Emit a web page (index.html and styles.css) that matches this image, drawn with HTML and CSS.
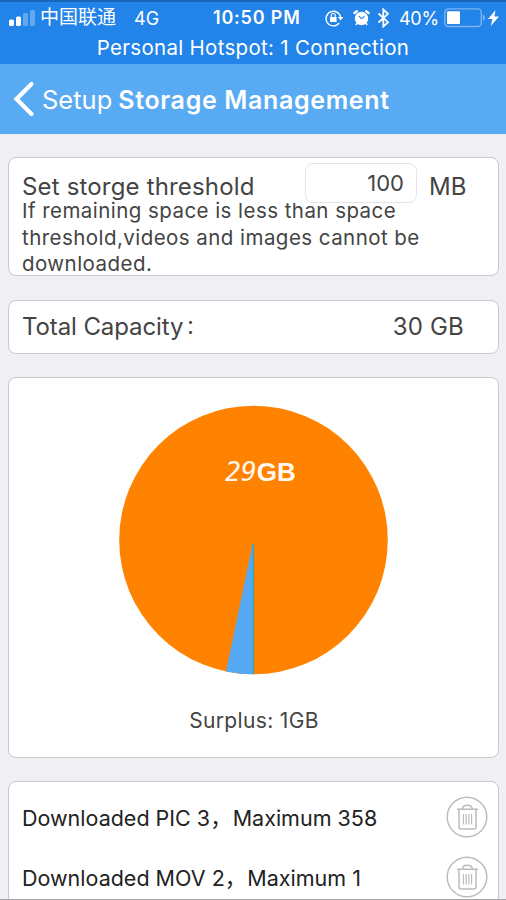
FILE: index.html
```html
<!DOCTYPE html>
<html lang="en">
<head>
<meta charset="utf-8">
<title>Storage Management</title>
<link rel="stylesheet" href="styles.css">
</head>
<body>
<header>
  <div class="status">
    <div class="status-row">
      <div class="status-left">
        <svg class="signal" width="27" height="18" viewBox="0 0 27 18" fill="#fff"><rect x="0" y="10.5" width="5" height="6.5" rx="1.5"/><rect x="7" y="7.5" width="5" height="9.5" rx="1.5"/><g opacity=".3"><rect x="14" y="4" width="5" height="13" rx="1.5"/><rect x="21" y="1" width="5" height="16" rx="1.5"/></g></svg>
        <span class="carrier">中国联通</span>
        <span class="network">4G</span>
      </div>
      <span class="clock">10:50 PM</span>
      <div class="status-right">
        <svg class="lock" width="19" height="18" viewBox="0 0 19 18"><path d="M14.2 14A7.3 7.3 0 1 1 15.6 8.500" fill="none" stroke="#fff" stroke-width="1.4"/><path d="M12.800 8h5.600l-2.800 3.600z" fill="#fff"/><rect x="5" y="8" width="6.6" height="5" rx=".6" fill="#fff"/><path d="M6.300 8V6.5a2 2 0 0 1 4 0V8" fill="none" stroke="#fff" stroke-width="1.2"/></svg>
        <svg class="alarm" width="17" height="18" viewBox="0 0 17 18"><circle cx="8.5" cy="9.5" r="6.7" fill="#fff"/><path d="M1.500 4 3.800 2.200M13.200 2.200 15.500 4" stroke="#fff" stroke-width="2.4" stroke-linecap="round"/><path d="m4 14.300-1.200 1.600m10.200-1.600 1.200 1.600" stroke="#fff" stroke-width="1.6"/><path d="M8.500 9.800 5.800 6.800M8.500 9.800l3-2.500" fill="none" stroke="#2283e8" stroke-width="1.100"/></svg>
        <svg class="bluetooth" width="13" height="20" viewBox="0 0 13 20"><path d="m1.5 5.5 9.5 8.7-4.7 4.3V1.5L11 5.8 1.5 14.5" fill="none" stroke="#fff" stroke-width="1.8"/></svg>
        <span class="percent">40%</span>
        <svg class="battery" width="42" height="20" viewBox="0 0 42 20"><rect x=".8" y=".9" width="36.500" height="17.6" rx="3.5" fill="none" stroke="#fff" stroke-opacity=".4" stroke-width="1.4"/><rect x="3" y="3.3" width="13" height="12.8" rx="1" fill="#fff"/><path d="M38.800 6.500c2.800 1 2.800 5.500 0 6.500z" fill="#fff" fill-opacity=".4"/></svg>
        <svg class="bolt" width="11" height="16" viewBox="0 0 11 16"><path d="M7.5 0 0 9h4.4L2.8 16 11 6.6H6.4z" fill="#fff"/></svg>
      </div>
    </div>
    <div class="hotspot">Personal Hotspot: 1 Connection</div>
  </div>
  <nav>
    <svg class="back" width="22" height="36" viewBox="0 0 22 36"><path d="M18.5 3 3.5 18l15 15" fill="none" stroke="#fff" stroke-width="4.2" stroke-linecap="round"/></svg>
    <span class="setup">Setup</span>
    <h1>Storage Management</h1>
  </nav>
</header>
<main>
  <section class="card threshold">
    <div class="threshold-row">
      <span class="label set-label">Set storge threshold</span>
      <span class="field">100</span>
      <span class="label unit">MB</span>
    </div>
    <p>If remaining space is less than space<br>threshold,videos and images cannot be<br>downloaded.</p>
  </section>
  <section class="card capacity">
    <span class="label total-label">Total Capacity<span class="cjk">：</span></span>
    <span class="label amount">30 GB</span>
  </section>
  <section class="card chart">
    <div class="pie">
      <svg width="270" height="270" viewBox="0 0 270 270"><circle cx="134.500" cy="135" r="134.3" fill="#ff8200"/><path d="M134 137 107 266.5A134.3 134.3 0 0 0 134.5 269.3z" fill="#55a9f3"/><path d="M134.3 139v130" stroke="#32a6bd" stroke-width="1.5"/></svg>
      <div class="pie-label"><span class="digits">29</span><b>GB</b></div>
    </div>
    <div class="surplus">Surplus: 1GB</div>
  </section>
  <section class="card downloads">
    <div class="item">
      <span class="pic">Downloaded PIC 3<span class="cjk">，</span>Maximum 358</span>
      <svg class="trash" width="42" height="42" viewBox="0 0 42 42" fill="none" stroke="#bcbcbc" stroke-width="1.5"><circle cx="21" cy="21" r="19.8"/><path d="M11 13.3h21M16.5 13c.2-5 9.500-5 9.700 0M13 14v17q0 2 2 2h13q2 0 2-2V14"/><path d="M17.500 18v10.500M20.200 18v10.500M22.900 18v10.500M25.600 18v10.500" stroke-width="1.200"/></svg>
    </div>
    <div class="item">
      <span class="mov">Downloaded MOV 2<span class="cjk">，</span>Maximum 1</span>
      <svg class="trash" width="42" height="42" viewBox="0 0 42 42" fill="none" stroke="#bcbcbc" stroke-width="1.5"><circle cx="21" cy="21" r="19.8"/><path d="M11 13.3h21M16.5 13c.2-5 9.500-5 9.700 0M13 14v17q0 2 2 2h13q2 0 2-2V14"/><path d="M17.500 18v10.500M20.200 18v10.500M22.900 18v10.500M25.600 18v10.500" stroke-width="1.200"/></svg>
    </div>
  </section>
</main>
</body>
</html>
```
FILE: styles.css
```css
* { box-sizing: border-box; }
body {
  margin: 0;
  height: 900px;
  overflow: hidden;
  display: flex;
  flex-direction: column;
  background: #efeff4;
  border-bottom: 1px solid #a5a5a8;
  color: #444;
  font-family: Inter, "Noto Sans CJK SC", sans-serif;
  white-space: nowrap;
}
svg { display: block; flex: none; }
header { flex: none; color: #fff; }
.status { height: 64px; background: #2283e8; border-top: 2px solid #1a66b8; }
.status-row { display: grid; grid-template-columns: 213px 112px 181px; height: 32px; align-items: center; }
.status-left, .status-right { display: flex; align-items: center; }
.signal { margin-left: 9px; }
.carrier { margin-left: 4px; font-size: 19px; line-height: 32px; }
.network { margin-left: 18px; font-size: 18px; }
.clock { font-size: 18px; font-weight: 600; line-height: 32px; letter-spacing: .8px; }
.alarm { margin-left: 9px; }
.bluetooth { margin-left: 7px; }
.percent { margin-left: 9px; font-size: 18px; letter-spacing: -.3px; }
.battery { margin-left: 5px; }
.bolt { margin-left: 2px; }
.hotspot { text-align: center; font-size: 20.500px; line-height: 27px; letter-spacing: .3px; }
nav { display: flex; align-items: center; height: 70px; background: #58abf3; }
.back { margin-left: 13px; }
.setup { margin: 1px 0 0 7px; font-size: 25.500px; font-weight: 400; }
h1 { margin: 1px 0 0 6px; font-size: 25px; font-weight: 600; letter-spacing: .65px; }
main { display: flex; flex-direction: column; gap: 24px; padding: 23px 7px 0 8px; flex: 1; min-height: 0; overflow: hidden; }
.card { flex: none; background: #fff; border: 1px solid #c9c9cc; border-radius: 8px; padding: 0 12px 0 13px; overflow: hidden; }
.label { font-size: 24px; font-weight: 400; }
.threshold { height: 119px; padding-top: 5px; }
.threshold-row { display: flex; height: 39px; }
.set-label { width: 283px; line-height: 47px; letter-spacing: .17px; }
.field { width: 112px; height: 40px; border: 1px solid #e5e5e5; border-radius: 8px; padding-right: 12px; text-align: right; font-size: 22px; line-height: 38px; }
.unit { margin-left: 12px; line-height: 47px; }
p { margin: -4px 0 0; font-size: 20.500px; line-height: 26.500px; letter-spacing: .45px; }
.capacity { display: flex; justify-content: space-between; height: 54px; margin-bottom: -1px; line-height: 52px; padding-right: 34px; }
.total-label { letter-spacing: -.1px; }
.total-label .cjk { position: relative; top: -1px; font-size: 20px; margin-left: 2px; }
.amount { letter-spacing: .2px; }
.cjk { font-family: "Noto Sans CJK SC", sans-serif; line-height: 1; }
.item .cjk { margin-right: 1px; }
.chart { height: 381px; display: flex; flex-direction: column; align-items: center; padding-top: 27px; }
.pie { display: grid; }
.pie svg, .pie-label { grid-area: 1 / 1; }
.pie-label { display: flex; align-items: baseline; justify-content: center; margin: 49px 0 0 13px; height: 36px; line-height: 36px; font-size: 26px; color: #fff8ef; }
.digits { font-family: "DejaVu Sans Mono", "DejaVu Sans", sans-serif; font-weight: 200; font-style: italic; }
.pie-label b { font-family: "Liberation Sans", sans-serif; }
.surplus { margin-top: 32px; font-size: 21px; line-height: 28px; letter-spacing: .35px; }
.downloads { height: 160px; margin-top: -1px; padding: 14px 10px 0 13px; color: #222; }
.item { display: flex; justify-content: space-between; height: 60px; font-size: 21.500px; line-height: 44px; letter-spacing: 0; }
```
